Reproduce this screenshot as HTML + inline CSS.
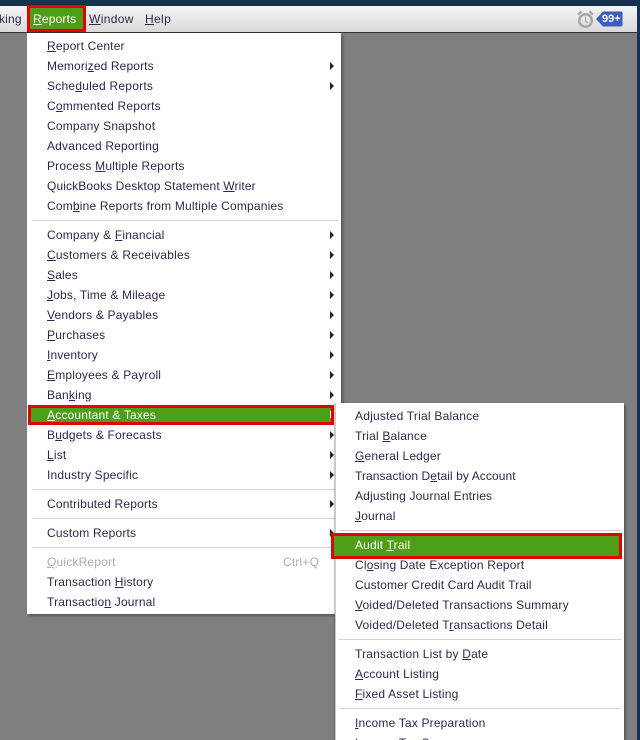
<!DOCTYPE html>
<html>
<head>
<meta charset="utf-8">
<style>
html,body{margin:0;padding:0;width:640px;height:740px;overflow:hidden;background:#7f7f7f;}
body{position:relative;font-family:"Liberation Sans",Arial,sans-serif;font-size:12px;color:#33264a;}
.a{position:absolute;}
.t{position:absolute;white-space:nowrap;line-height:14px;height:14px;letter-spacing:.18px;}
.t u{text-decoration:underline;text-underline-offset:1px;}
.arr{position:absolute;width:0;height:0;border-left:4px solid #222;border-top:4px solid transparent;border-bottom:4px solid transparent;}
.sep{position:absolute;height:1px;background:#d0d0d0;}
.menu{position:absolute;background:#fff;box-shadow:2px 2px 2px rgba(60,60,60,.55);}
</style>
</head>
<body>
<div class="a" style="left:0;top:0;width:640px;height:6px;background:#17324f;"></div>
<div class="a" style="left:0;top:6px;width:637px;height:26px;background:linear-gradient(#f4f4f4,#d9d9d9);"></div>
<div class="a" style="left:0;top:32px;width:637px;height:1px;background:#333;"></div>
<div class="a" style="left:637px;top:0;width:3px;height:740px;background:#17324f;"></div>

<div class="t" style="left:-1px;top:12px;">king</div>
<div class="a" style="left:27px;top:5px;width:59px;height:27px;box-sizing:border-box;background:#4e9e18;border:3px solid #e30000;"></div>
<div class="t" style="left:33px;top:12px;color:#fff;"><u>R</u>eports</div>
<div class="t" style="left:89px;top:12px;letter-spacing:.35px;"><u>W</u>indow</div>
<div class="t" style="left:145px;top:12px;letter-spacing:.35px;"><u>H</u>elp</div>

<svg class="a" style="left:576px;top:10px;" width="19" height="19" viewBox="0 0 19 19">
<circle cx="9.500" cy="10.500" r="6.300" fill="none" stroke="#a5a5a5" stroke-width="2.400"/>
<path d="M9.500 6.500V11L12 13" fill="none" stroke="#a5a5a5" stroke-width="1.200"/>
<path d="M2 4.500L5.500 1.500M17 4.500L13.500 1.500" stroke="#a5a5a5" stroke-width="2.400" fill="none"/>
</svg>
<svg class="a" style="left:596px;top:11px;" width="27" height="16" viewBox="0 0 27 16"><path d="M0 8L7 0.500H25a1.500 1.500 0 0 1 1.500 1.500V14a1.500 1.500 0 0 1-1.500 1.500H7Z" fill="#3a5cbd"/></svg>
<div class="t" style="left:602px;top:12px;color:#fff;font-weight:bold;font-size:11px;letter-spacing:0;">99+</div>

<div class="menu" style="left:27px;top:33px;width:314px;height:581px;"></div>
<div class="sep" style="left:32px;top:220px;width:306px;"></div>
<div class="sep" style="left:32px;top:489px;width:306px;"></div>
<div class="sep" style="left:32px;top:518px;width:306px;"></div>
<div class="sep" style="left:32px;top:547px;width:306px;"></div>

<div class="t" style="left:47px;top:39px;"><u>R</u>eport Center</div>
<div class="t" style="left:47px;top:59px;letter-spacing:.12px;">Memori<u>z</u>ed Reports</div>
<div class="t" style="left:47px;top:79px;letter-spacing:.24px;">Sche<u>d</u>uled Reports</div>
<div class="t" style="left:47px;top:99px;">C<u>o</u>mmented Reports</div>
<div class="t" style="left:47px;top:119px;">Company Snapshot</div>
<div class="t" style="left:47px;top:139px;">Advanced Reporting</div>
<div class="t" style="left:47px;top:159px;">Process <u>M</u>ultiple Reports</div>
<div class="t" style="left:47px;top:179px;letter-spacing:.12px;">QuickBooks Desktop Statement <u>W</u>riter</div>
<div class="t" style="left:47px;top:199px;">Com<u>b</u>ine Reports from Multiple Companies</div>
<div class="t" style="left:47px;top:228px;">Company &amp; <u>F</u>inancial</div>
<div class="t" style="left:47px;top:248px;letter-spacing:.22px;"><u>C</u>ustomers &amp; Receivables</div>
<div class="t" style="left:47px;top:268px;"><u>S</u>ales</div>
<div class="t" style="left:47px;top:288px;"><u>J</u>obs, Time &amp; Mileage</div>
<div class="t" style="left:47px;top:308px;"><u>V</u>endors &amp; Payables</div>
<div class="t" style="left:47px;top:328px;"><u>P</u>urchases</div>
<div class="t" style="left:47px;top:348px;"><u>I</u>nventory</div>
<div class="t" style="left:47px;top:368px;"><u>E</u>mployees &amp; Payroll</div>
<div class="t" style="left:47px;top:388px;">Ban<u>k</u>ing</div>
<div class="a" style="left:28px;top:405px;width:306px;height:20px;box-sizing:border-box;background:#4e9e18;border:3px solid #e30000;"></div>
<div class="t" style="left:47px;top:408px;color:#fff;"><u>A</u>ccountant &amp; Taxes</div>
<div class="a" style="left:330px;top:411px;width:1px;height:7px;background:#fff;"></div>
<div class="t" style="left:47px;top:428px;">B<u>u</u>dgets &amp; Forecasts</div>
<div class="t" style="left:47px;top:448px;"><u>L</u>ist</div>
<div class="t" style="left:47px;top:468px;">Industry Specific</div>
<div class="t" style="left:47px;top:497px;">Contributed Reports</div>
<div class="t" style="left:47px;top:526px;">Custom Reports</div>
<div class="t" style="left:47px;top:555px;color:#a9a9b8;"><u>Q</u>uickReport</div>
<div class="t" style="left:283px;top:555px;color:#a9a9b8;">Ctrl+Q</div>
<div class="t" style="left:47px;top:575px;">Transaction <u>H</u>istory</div>
<div class="t" style="left:47px;top:595px;">Transactio<u>n</u> Journal</div>

<div class="arr" style="left:330px;top:62px;"></div>
<div class="arr" style="left:330px;top:82px;"></div>
<div class="arr" style="left:330px;top:231px;"></div>
<div class="arr" style="left:330px;top:251px;"></div>
<div class="arr" style="left:330px;top:271px;"></div>
<div class="arr" style="left:330px;top:291px;"></div>
<div class="arr" style="left:330px;top:311px;"></div>
<div class="arr" style="left:330px;top:331px;"></div>
<div class="arr" style="left:330px;top:351px;"></div>
<div class="arr" style="left:330px;top:371px;"></div>
<div class="arr" style="left:330px;top:391px;"></div>
<div class="arr" style="left:330px;top:431px;"></div>
<div class="arr" style="left:330px;top:451px;"></div>
<div class="arr" style="left:330px;top:471px;"></div>
<div class="arr" style="left:330px;top:500px;"></div>
<div class="arr" style="left:330px;top:529px;"></div>

<div class="menu" style="left:335px;top:403px;width:289px;height:337px;border-left:1px solid #c8c8c8;box-sizing:border-box;box-shadow:2px 2px 2px rgba(60,60,60,.55),-1px 0 1px rgba(60,60,60,.3);"></div>
<div class="sep" style="left:339px;top:530px;width:282px;"></div>
<div class="sep" style="left:339px;top:639px;width:282px;"></div>
<div class="sep" style="left:339px;top:708px;width:282px;"></div>

<div class="t" style="left:355px;top:409px;letter-spacing:.22px;">Ad<u>j</u>usted Trial Balance</div>
<div class="t" style="left:355px;top:429px;">Trial <u>B</u>alance</div>
<div class="t" style="left:355px;top:449px;"><u>G</u>eneral Ledger</div>
<div class="t" style="left:355px;top:469px;letter-spacing:.08px;">Transaction D<u>e</u>tail by Account</div>
<div class="t" style="left:355px;top:489px;">Adjusting Journal Entries</div>
<div class="t" style="left:355px;top:509px;"><u>J</u>ournal</div>
<div class="a" style="left:331px;top:533px;width:291px;height:26px;box-sizing:border-box;background:#4e9e18;border:3px solid #e30000;"></div>
<div class="t" style="left:355px;top:538px;color:#fff;">Audit <u>T</u>rail</div>
<div class="t" style="left:355px;top:558px;">Cl<u>o</u>sing Date Exception Report</div>
<div class="t" style="left:355px;top:578px;letter-spacing:.12px;">Customer Credit Card Audit Trail</div>
<div class="t" style="left:355px;top:598px;"><u>V</u>oided/Deleted Transactions Summary</div>
<div class="t" style="left:355px;top:618px;">Voided/Deleted T<u>r</u>ansactions Detail</div>
<div class="t" style="left:355px;top:647px;">Transaction List by <u>D</u>ate</div>
<div class="t" style="left:355px;top:667px;"><u>A</u>ccount Listing</div>
<div class="t" style="left:355px;top:687px;"><u>F</u>ixed Asset Listing</div>
<div class="t" style="left:355px;top:716px;"><u>I</u>ncome Tax Preparation</div>
<div class="t" style="left:355px;top:736px;"><u>I</u>ncome Tax Summary</div>
</body>
</html>
